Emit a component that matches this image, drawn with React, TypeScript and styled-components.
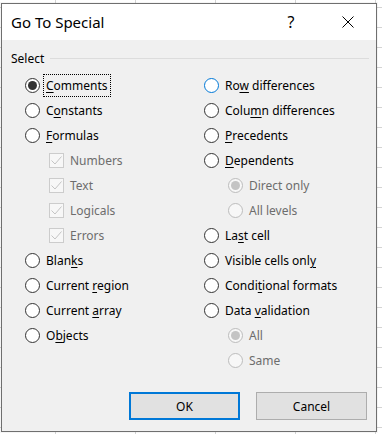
import React from "react";
import styled, { createGlobalStyle, css } from "styled-components";

const GlobalStyle = createGlobalStyle`
  html, body {
    margin: 0;
    padding: 0;
  }
  body {
    font-family: "Segoe UI", "Noto Sans", "Open Sans", sans-serif;
    color: #000;
  }
  * {
    box-sizing: border-box;
  }
`;

const Sheet = styled.div`
  width: 382px;
  height: 434px;
  padding: 3px 5px 2px 1px;
  background-color: #fff;
  background-image: linear-gradient(to right, #d4d4d4 1px, transparent 1px),
    linear-gradient(to bottom, #d4d4d4 1px, transparent 1px);
  background-size: 80px 20px;
  background-position: 55px 7px;
`;

const Dialog = styled.div`
  width: 376px;
  height: 429px;
  border: 1px solid #6f6f6f;
  display: flex;
  flex-direction: column;
  box-shadow: 0 0 0 1px rgba(0, 0, 0, 0.04);
`;

const TitleBar = styled.div`
  height: 36px;
  background: #fff;
  display: flex;
  align-items: center;
  padding-left: 9px;
`;

const Title = styled.div`
  font-size: 15px;
  flex: 1;
`;

const TitleButton = styled.div<{ $w: number }>`
  width: ${({ $w }) => $w}px;
  height: 36px;
  display: flex;
  align-items: center;
  justify-content: center;
  font-size: 16px;
`;

const Body = styled.div`
  flex: 1;
  background: #f0f0f0;
  padding-top: 10px;
  display: flex;
  flex-direction: column;
`;

const GroupHeader = styled.div`
  display: flex;
  align-items: center;
  height: 16px;
  padding-left: 9px;
  padding-right: 7px;
  font-size: 12px;
`;

const GroupLine = styled.div`
  flex: 1;
  height: 1px;
  margin-left: 6px;
  background: #dcdcdc;
`;

const Columns = styled.div`
  display: grid;
  grid-template-columns: 179px 1fr;
  margin-top: 7px;
  padding-left: 23px;
`;

const Column = styled.div`
  display: flex;
  flex-direction: column;
`;

const Row = styled.div<{ $indent?: boolean }>`
  height: 25px;
  display: flex;
  align-items: center;
  padding-left: ${({ $indent }) => ($indent ? 24 : 0)}px;
`;

const Radio = styled.span<{
  $checked?: boolean;
  $disabled?: boolean;
  $hover?: boolean;
}>`
  width: 15px;
  height: 15px;
  border-radius: 50%;
  border: 1px solid #333;
  background: #fff;
  display: flex;
  align-items: center;
  justify-content: center;
  flex: none;
  ${({ $hover }) =>
    $hover &&
    css`
      border-color: #0078d7;
    `}
  ${({ $disabled }) =>
    $disabled &&
    css`
      border-color: #bcbcbc;
      background: #f7f7f7;
    `}
  &::after {
    content: "";
    display: ${({ $checked }) => ($checked ? "block" : "none")};
    width: 9px;
    height: 9px;
    border-radius: 50%;
    background: ${({ $disabled }) => ($disabled ? "#c4c4c4" : "#333")};
  }
`;

const Check = styled.span`
  width: 15px;
  height: 15px;
  border: 1px solid #cccccc;
  background: #f7f7f7;
  flex: none;
  display: flex;
`;

const Label = styled.span<{ $disabled?: boolean; $focus?: boolean }>`
  font-size: 12px;
  line-height: 17px;
  padding: 2px 2px;
  margin-left: 4px;
  white-space: nowrap;
  color: ${({ $disabled }) => ($disabled ? "#6d6d6d" : "#000")};
  outline: ${({ $focus }) => ($focus ? "1px dotted #000" : "none")};
  u {
    text-decoration-thickness: 1px;
    text-underline-offset: 2px;
  }
`;

const Footer = styled.div`
  margin-top: auto;
  display: flex;
  justify-content: flex-end;
  gap: 16px;
  padding: 0 9px 11px 0;
`;

const Button = styled.button<{ $primary?: boolean }>`
  width: 111px;
  height: 28px;
  font-family: inherit;
  font-size: 12px;
  color: #000;
  background: #e1e1e1;
  border: ${({ $primary }) =>
    $primary ? "2px solid #0078d7" : "1px solid #adadad"};
  padding: 0;
`;

type Item = {
  label: React.ReactNode;
  kind?: "radio" | "check";
  indent?: boolean;
  checked?: boolean;
  disabled?: boolean;
  hover?: boolean;
  focus?: boolean;
};

const u = (before: string, key: string, after: string) => (
  <>
    {before}
    <u>{key}</u>
    {after}
  </>
);

const leftItems: Item[] = [
  { label: u("", "C", "omments"), checked: true, focus: true },
  { label: u("C", "o", "nstants") },
  { label: u("", "F", "ormulas") },
  { label: "Numbers", kind: "check", indent: true, checked: true, disabled: true },
  { label: "Text", kind: "check", indent: true, checked: true, disabled: true },
  { label: "Logicals", kind: "check", indent: true, checked: true, disabled: true },
  { label: "Errors", kind: "check", indent: true, checked: true, disabled: true },
  { label: u("Blan", "k", "s") },
  { label: u("Current ", "r", "egion") },
  { label: u("Current ", "a", "rray") },
  { label: u("O", "b", "jects") },
];

const rightItems: Item[] = [
  { label: u("Ro", "w", " differences"), hover: true },
  { label: u("Colu", "m", "n differences") },
  { label: u("", "P", "recedents") },
  { label: u("", "D", "ependents") },
  { label: "Direct only", indent: true, checked: true, disabled: true },
  { label: "All levels", indent: true, disabled: true },
  { label: u("La", "s", "t cell") },
  { label: u("Visible cells onl", "y", "") },
  { label: u("Condi", "t", "ional formats") },
  { label: u("Data ", "v", "alidation") },
  { label: "All", indent: true, checked: true, disabled: true },
  { label: "Same", indent: true, disabled: true },
];

function CheckMark() {
  return (
    <svg width="13" height="13" viewBox="0 0 13 13">
      <polyline
        points="1.5,6.5 5,10 11.5,2.5"
        fill="none"
        stroke="#c4c4c4"
        strokeWidth="1"
      />
    </svg>
  );
}

function Option({ item }: { item: Item }) {
  return (
    <Row $indent={item.indent}>
      {item.kind === "check" ? (
        <Check>{item.checked && <CheckMark />}</Check>
      ) : (
        <Radio
          $checked={item.checked}
          $disabled={item.disabled}
          $hover={item.hover}
        />
      )}
      <Label $disabled={item.disabled} $focus={item.focus}>
        {item.label}
      </Label>
    </Row>
  );
}

export default function App() {
  return (
    <>
      <GlobalStyle />
      <Sheet>
        <Dialog>
          <TitleBar>
            <Title>Go To Special</Title>
            <TitleButton $w={80}>?</TitleButton>
            <TitleButton $w={34}>
              <svg width="12" height="12" viewBox="0 0 12 12">
                <path d="M0.5 0.5 L11.5 11.5 M11.5 0.5 L0.5 11.5" stroke="#000" strokeWidth="1" />
              </svg>
            </TitleButton>
            <TitleButton $w={11} />
          </TitleBar>
          <Body>
            <GroupHeader>
              Select
              <GroupLine />
            </GroupHeader>
            <Columns>
              <Column>
                {leftItems.map((item, i) => (
                  <Option key={i} item={item} />
                ))}
              </Column>
              <Column>
                {rightItems.map((item, i) => (
                  <Option key={i} item={item} />
                ))}
              </Column>
            </Columns>
            <Footer>
              <Button $primary>OK</Button>
              <Button>Cancel</Button>
            </Footer>
          </Body>
        </Dialog>
      </Sheet>
    </>
  );
}
